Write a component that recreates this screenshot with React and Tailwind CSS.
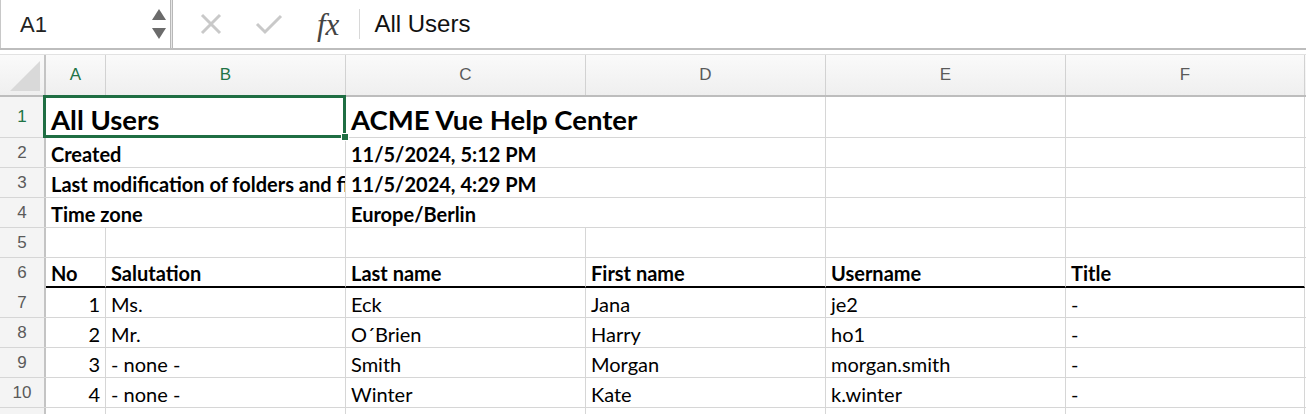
import React from 'react';

// Column template shared by the header row and every sheet row:
// row numbers, A..F, and whatever is left at the right edge.
const COLS = 'grid grid-cols-[46px_60px_240px_240px_240px_240px_239px_1fr]';
const CELL_FONT = { fontFamily: 'Lato, "Open Sans", sans-serif' };
const UI_FONT = { fontFamily: '"Liberation Sans", Arial, sans-serif' };

const users = [
  { no: 1, salutation: 'Ms.', last: 'Eck', first: 'Jana', username: 'je2', title: '-' },
  { no: 2, salutation: 'Mr.', last: 'O´Brien', first: 'Harry', username: 'ho1', title: '-' },
  { no: 3, salutation: '- none -', last: 'Smith', first: 'Morgan', username: 'morgan.smith', title: '-' },
  { no: 4, salutation: '- none -', last: 'Winter', first: 'Kate', username: 'k.winter', title: '-' },
];

const meta = [
  { label: 'Created', value: '11/5/2024, 5:12 PM' },
  { label: 'Last modification of folders and files', value: '11/5/2024, 4:29 PM' },
  { label: 'Time zone', value: 'Europe/Berlin' },
];

const RowNum = ({ n, active }) => (
  <div
    style={UI_FONT}
    className={`flex items-center justify-center border-r-2 border-[#c4c4c4] bg-[#f4f4f4] text-[17px] ${
      active ? 'text-[#217346]' : 'text-[#5a5a5a]'
    }`}
  >
    {n}
  </div>
);

// Bottom-aligned like Excel; baseline sits ~22px under the row top.
const Cell = ({ children, span = '', className = '' }) => (
  <div
    style={CELL_FONT}
    className={`flex items-end overflow-hidden whitespace-nowrap border-r border-[#d6d6d6] px-[5px] pb-[3px] text-[20px] leading-[20px] tabular-nums text-black ${span} ${className}`}
  >
    {children}
  </div>
);

const FormulaBar = () => (
  <div className="flex h-[50px] items-center border-b-2 border-[#bdbdbd] bg-white">
    <div className="flex h-full w-[170px] items-center justify-between border-l border-[#c8c8c8] pl-[19px] pr-[4px]">
      <span style={UI_FONT} className="text-[22px] text-[#222]">A1</span>
      <div className="flex flex-col gap-[8px]">
        <svg width="14" height="11" viewBox="0 0 14 11"><path d="M7 0 L14 11 L0 11 Z" fill="#6b6b6b" /></svg>
        <svg width="14" height="11" viewBox="0 0 14 11"><path d="M0 0 L14 0 L7 11 Z" fill="#6b6b6b" /></svg>
      </div>
    </div>
    <div className="h-full w-[3px] border-x border-[#b8b8b8] bg-[#e6e6e6]" />
    <div className="flex h-full flex-1 items-center">
      <svg className="ml-[27px]" width="22" height="22" viewBox="0 0 22 22">
        <path d="M2 2 L20 20 M20 2 L2 20" stroke="#c9c9c9" strokeWidth="3" />
      </svg>
      <svg className="ml-[33px]" width="28" height="22" viewBox="0 0 28 22">
        <path d="M2 11 L10 19 L26 3" stroke="#c9c9c9" strokeWidth="3" fill="none" />
      </svg>
      <span
        className="ml-[34px] text-[31px] italic leading-none text-[#444]"
        style={{ fontFamily: '"Liberation Serif", "Times New Roman", serif' }}
      >
        fx
      </span>
      <div className="ml-[20px] h-[30px] w-px bg-[#d8d8d8]" />
      <span style={UI_FONT} className="ml-[14px] text-[24px] text-[#111]">All Users</span>
    </div>
  </div>
);

const ColumnHeaders = () => (
  <div
    style={UI_FONT}
    className={`${COLS} mt-[4px] h-[43px] border-b-2 border-t border-[#bdbdbd] border-t-[#e2e2e2] bg-gradient-to-b from-[#fafafa] to-[#efefef] text-[17px]`}
  >
    <div className="relative border-r-2 border-[#c4c4c4]">
      <svg className="absolute bottom-[4px] right-[4px]" width="30" height="30" viewBox="0 0 30 30">
        <path d="M30 0 L30 30 L0 30 Z" fill="#d9d9d9" />
      </svg>
    </div>
    {['A', 'B', 'C', 'D', 'E', 'F'].map((c, i) => (
      <div
        key={c}
        className={`flex items-center justify-center border-r border-[#d2d2d2] ${
          i < 2 ? 'text-[#217346]' : 'text-[#5a5a5a]'
        }`}
      >
        {c}
      </div>
    ))}
    <div />
  </div>
);

const App = () => (
  <div className="h-[414px] w-[1306px] overflow-hidden bg-white">
    <FormulaBar />
    <ColumnHeaders />

    <div className="relative">
      {/* row 1: merged title cells */}
      <div className={`${COLS} h-[41px] border-b border-[#d6d6d6]`}>
        <RowNum n={1} active />
        <Cell span="col-span-2" className="text-[27.5px] leading-[28px] font-bold">All Users</Cell>
        <Cell span="col-span-2" className="text-[27.5px] leading-[28px] font-bold">ACME Vue Help Center</Cell>
        <Cell />
        <Cell />
        <div />
      </div>

      {/* rows 2-4: export metadata */}
      {meta.map((m, i) => (
        <div key={m.label} className={`${COLS} h-[30px] border-b border-[#d6d6d6]`}>
          <RowNum n={i + 2} />
          <Cell span="col-span-2" className="font-bold">{m.label}</Cell>
          <Cell span="col-span-2" className="font-bold">{m.value}</Cell>
          <Cell />
          <Cell />
          <div />
        </div>
      ))}

      {/* row 5: spacer */}
      <div className={`${COLS} h-[30px] border-b border-[#d6d6d6]`}>
        <RowNum n={5} />
        <Cell />
        <Cell />
        <Cell />
        <Cell />
        <Cell />
        <Cell />
        <div />
      </div>

      {/* row 6: table header with heavy underline */}
      <div className={`${COLS} h-[30px]`}>
        <RowNum n={6} />
        {['No', 'Salutation', 'Last name', 'First name', 'Username', 'Title'].map((h) => (
          <Cell key={h} className="border-b-2 border-b-black font-bold">{h}</Cell>
        ))}
        <div />
      </div>

      {users.map((u, i) => (
        <div key={u.no} className={`${COLS} h-[30px] border-b border-[#d6d6d6]`}>
          <RowNum n={i + 7} />
          <Cell className="justify-end">{u.no}</Cell>
          <Cell>{u.salutation}</Cell>
          <Cell>{u.last}</Cell>
          <Cell>{u.first}</Cell>
          <Cell>{u.username}</Cell>
          <Cell>{u.title}</Cell>
          <div />
        </div>
      ))}

      {/* row 11 is only a sliver at the bottom edge */}
      <div className={`${COLS} h-[30px]`}>
        <RowNum n="" />
        <Cell />
        <Cell />
        <Cell />
        <Cell />
        <Cell />
        <Cell />
        <div />
      </div>

      {/* selection outline around A1:B1 with fill handle */}
      <div className="pointer-events-none absolute left-[43px] top-[-2px] h-[43px] w-[303px] border-[3px] border-[#1f6e43]" />
      <div className="pointer-events-none absolute left-[341px] top-[36px] h-[8px] w-[8px] border border-white bg-[#1f6e43]" />
    </div>
  </div>
);

export default App;
